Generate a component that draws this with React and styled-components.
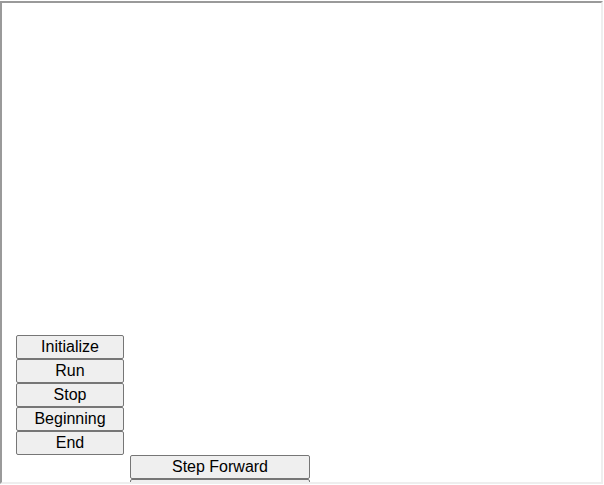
import React from 'react';
import styled, { createGlobalStyle } from 'styled-components';

const GlobalStyle = createGlobalStyle`
  html, body {
    margin: 0;
    padding: 0;
    background: #ffffff;
    overflow: hidden;
  }
  body {
    font-family: "Liberation Sans", Arial, sans-serif;
  }
`;

const Frame = styled.div`
  box-sizing: border-box;
  width: 603px;
  height: 483px;
  margin-top: 1px;
  border-style: solid;
  border-width: 2px;
  border-color: #9a9a9a #eeeeee #eeeeee #9a9a9a;
  overflow: hidden;
  background: #ffffff;
`;

const Stage = styled.div`
  height: 332px;
`;

const Controls = styled.div`
  display: flex;
  flex-direction: column;
  padding-left: 14px;
`;

const Stack = styled.div`
  display: flex;
  flex-direction: column;
  width: ${(p) => p.$width}px;
  margin-left: ${(p) => p.$offset || 0}px;
`;

const Button = styled.button`
  box-sizing: border-box;
  width: 100%;
  height: 24px;
  margin: 0;
  padding: 0 6px;
  border: 1px solid #767676;
  border-radius: 2px;
  background: #efefef;
  color: #000000;
  font-family: "Liberation Sans", Arial, sans-serif;
  font-size: 16px;
  line-height: 20px;
  text-align: center;
  cursor: default;
`;

export default function App() {
  const playback = ['Initialize', 'Run', 'Stop', 'Beginning', 'End'];
  const stepping = ['Step Forward', 'Step Backward'];

  return (
    <>
      <GlobalStyle />
      <Frame>
        <Stage />
        <Controls>
          <Stack $width={108}>
            {playback.map((label) => (
              <Button key={label}>{label}</Button>
            ))}
          </Stack>
          <Stack $width={180} $offset={114}>
            {stepping.map((label) => (
              <Button key={label}>{label}</Button>
            ))}
          </Stack>
        </Controls>
      </Frame>
    </>
  );
}
